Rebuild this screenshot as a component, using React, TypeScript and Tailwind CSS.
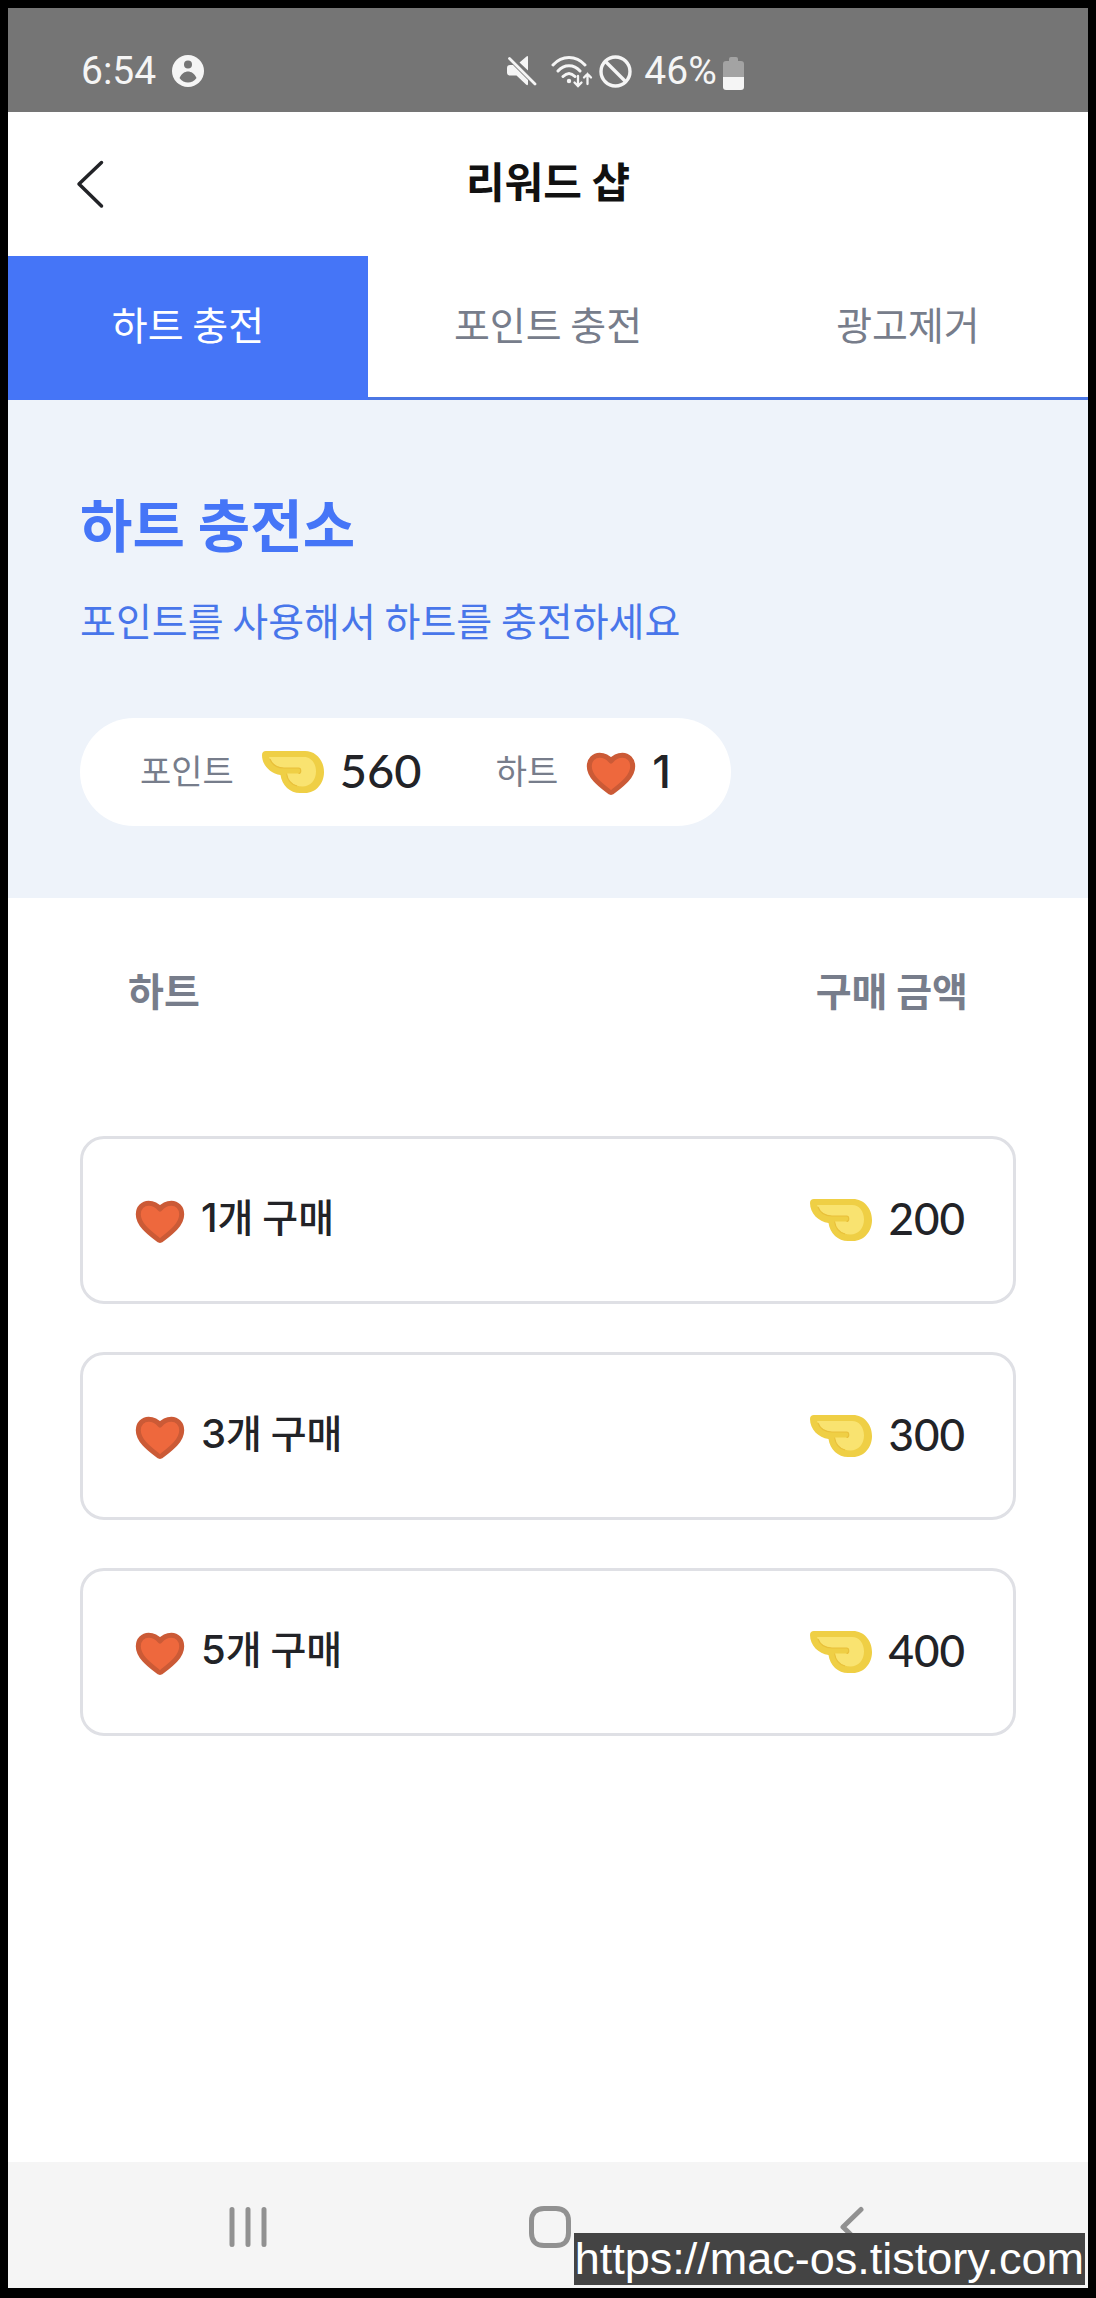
import React from "react";

const fonts = "font-['Noto_Sans_CJK_KR',sans-serif]";
const priceFont = "font-['Lato','Noto_Sans_CJK_KR',sans-serif]";
const countFont = "font-['Inter','Noto_Sans_CJK_KR',sans-serif]";

function HeartIcon() {
  return (
    <svg width="50" height="44" viewBox="0 0 50 44" aria-hidden="true" className="mt-1 shrink-0">
      <path
        d="M25 40.5C23.8 40.5 22.800 39.500 21.500 38.300C14 32.500 3.300 24.500 3.300 14.200C3.300 7.600 8 3.200 13.600 3.200C18.600 3.200 22.600 5.800 25 9C27.400 5.800 31.400 3.200 36.400 3.200C42 3.200 46.700 7.600 46.700 14.200C46.700 24.500 36 32.500 28.500 38.300C27.200 39.500 26.200 40.500 25 40.500Z"
        fill="#ee683d"
        stroke="#cb5a36"
        strokeWidth="5"
        strokeLinejoin="round"
      />
    </svg>
  );
}

function PointIcon() {
  return (
    <svg width="62" height="42" viewBox="0 0 62 42" aria-hidden="true" className="shrink-0">
      <path
        d="M4 0H43C54 0 62 9.500 62 21C62 32.500 54 42 43 42H38C28 42 20 34.500 18.500 24C8.500 22.500 0 14.500 0 4C0 1.500 1.500 0 4 0Z"
        fill="#efcf45"
      />
      <path
        d="M7 6H42C49 6 54 12 54 20.500C54 29 48.500 35.500 40.500 35.500C32 35.500 25.500 30.500 24.500 22.500H36.500C39.500 22.500 39.500 17 36.500 17H22C15 16.500 9.500 12.500 7 6Z"
        fill="#f9e370"
      />
      <path
        d="M8 8C10 13.500 15 17 22 17H36.500C39.500 17 39.500 22.500 36.500 22.500M24.500 22.500C25.500 29 29.500 33.500 35 35"
        fill="none"
        stroke="#e9c03a"
        strokeWidth="1.2"
      />
    </svg>
  );
}

function StatusBar() {
  return (
    <div className="flex h-[104px] items-center bg-[#757575] px-[73px] pt-[22px] font-['Roboto',sans-serif] text-[39px] leading-[46px] text-[#f5f5f5]">
      <div className="flex flex-[11] items-center gap-4">
        <span>6:54</span>
        <svg width="32" height="32" viewBox="0 0 32 32" aria-hidden="true">
          <circle cx="16" cy="16" r="16" fill="#f5f5f5" />
          <circle cx="16" cy="9.500" r="4" fill="#757575" />
          <path d="M7.500 23C9.500 18.500 13 16.500 16 16.500C19 16.500 22.500 18.500 24.500 23C22.500 26 19 27.500 16 27.500C13 27.500 9.500 26 7.500 23Z" fill="#757575" />
        </svg>
      </div>
      <div className="flex items-center">
        <svg width="30" height="30" viewBox="0 0 30 30" aria-hidden="true">
          <path d="M21 1V14.500L12.500 6.500L19.500 0.500Q21 -0.500 21 1ZM0 12Q0 9 3 9H6L21 24V28Q21 30 19 28.500L9.500 19.500H3Q0 19.500 0 16.500Z" fill="#f5f5f5" />
          <path d="M2.500 2.500L28 28" stroke="#f5f5f5" strokeWidth="2.800" strokeLinecap="round" />
        </svg>
        <svg width="42" height="34" viewBox="0 0 42 34" fill="none" stroke="#f5f5f5" strokeWidth="3" strokeLinecap="round" className="ml-3.5">
          <path d="M2 11C11 1 25 1 34 11M7 17C13 10 23 10 29 17M12 22.500C16 18.500 20 18.500 24 22.500" />
          <circle cx="18" cy="27" r="2.200" fill="#f5f5f5" stroke="none" />
          <path d="M27 22V32M23.500 28.500L27 32L30.500 28.500M36.500 30V20M33 23.500L36.500 20L40 23.500" strokeWidth="2.300" />
        </svg>
        <svg width="33" height="33" viewBox="0 0 33 33" fill="none" stroke="#f5f5f5" strokeWidth="3.400" className="ml-1.5">
          <circle cx="16.500" cy="16.500" r="14.500" />
          <path d="M6.500 6.500L26.500 26.500" />
        </svg>
        <span className="ml-3">46%</span>
        <svg width="21" height="33" viewBox="0 0 21 33" aria-hidden="true" className="mt-1 ml-1.5">
          <path d="M6 2Q6 0 8 0H13Q15 0 15 2V4H18Q21 4 21 7V20H0V7Q0 4 3 4H6Z" fill="#a3a3a3" />
          <path d="M0 20H21V30Q21 33 18 33H3Q0 33 0 30Z" fill="#f5f5f5" />
        </svg>
      </div>
      <div className="flex-[7]" />
    </div>
  );
}

const tabs = ["하트 충전", "포인트 충전", "광고제거"];
const items = [
  { count: 1, price: 200 },
  { count: 3, price: 300 },
  { count: 5, price: 400 },
];

export default function App() {
  return (
    <div className={`${fonts} flex min-h-screen flex-col border-8 border-b-[10px] border-black bg-white text-[#222327]`}>
      <StatusBar />

      <header className="grid h-36 grid-cols-[1fr_auto_1fr] items-center px-16">
        <button type="button" aria-label="뒤로" className="w-fit">
          <svg width="36" height="50" viewBox="0 0 36 50" fill="none" stroke="#222327" strokeWidth="3.500" strokeLinecap="round" strokeLinejoin="round">
            <path d="M29.500 3.500L7 25L29.500 47" />
          </svg>
        </button>
        <h1 className="pb-2 text-[42px] leading-[60px] font-bold text-[#111111]">리워드 샵</h1>
      </header>

      <nav className="grid h-36 grid-cols-3 text-[39px] leading-[58px]">
        {tabs.map((tab, i) => (
          <button
            key={tab}
            type="button"
            aria-current={i === 0 ? "page" : undefined}
            className={
              i === 0
                ? "border-b-[3px] border-[#4575f7] bg-[#4575f7] pb-2 text-white"
                : "border-b-[3px] border-[#4b77e4] bg-white pb-2 text-[#777d8b]"
            }
          >
            {tab}
          </button>
        ))}
      </nav>

      <section className="bg-[#eef3fa] px-18 pt-20 pb-18 text-[#4575f7]">
        <h2 className="text-[57px] leading-[84px] font-bold">하트 충전소</h2>
        <p className="mt-[26px] text-[39px] leading-[58px] text-[#4876ea]">포인트를 사용해서 하트를 충전하세요</p>
        <div className="mt-[70px] flex h-[108px] w-fit items-center rounded-full bg-white px-[60px] text-[#222327]">
          <span className="pb-1.5 text-[34px] text-[#777d8b]">포인트</span>
          <span className="ml-7 flex items-center gap-4">
            <PointIcon />
            <span className={`${priceFont} pb-1 text-[47px] font-medium`}>560</span>
          </span>
          <span className="ml-[74px] pb-1.5 text-[34px] text-[#777d8b]">하트</span>
          <span className="ml-7 flex items-center gap-4">
            <HeartIcon />
            <span className={`${countFont} text-[45px] font-medium`}>1</span>
          </span>
        </div>
      </section>

      <main className="flex-1 px-18">
        <div className="flex justify-between px-12 pt-[62px] pb-[118px] text-[39px] leading-[58px] font-bold text-[#777d8b]">
          <span>하트</span>
          <span>구매 금액</span>
        </div>
        <ul className="flex flex-col gap-12">
          {items.map((item) => (
            <li key={item.count}>
              <button
                type="button"
                className="flex h-[168px] w-full items-center justify-between rounded-3xl border-[3px] border-[#dfe0e5] bg-white pr-12 pl-[52px] text-[39px] leading-[58px] font-medium"
              >
                <span className="flex items-center gap-4">
                  <HeartIcon />
                  <span className="pb-2">
                    <span className={`${countFont} text-[40px]`}>{item.count}</span>개 구매
                  </span>
                </span>
                <span className="flex items-center gap-4">
                  <PointIcon />
                  <span className={`${priceFont} pb-1 text-[44px]`}>{item.price}</span>
                </span>
              </button>
            </li>
          ))}
        </ul>
      </main>

      <footer className="relative flex h-[126px] items-center justify-center gap-[260px] bg-[#f5f5f5] pt-1 pl-1">
        <button type="button" aria-label="최근 앱" className="flex w-[42px] justify-center">
          <svg width="38" height="42" viewBox="0 0 38 42" stroke="#919191" strokeWidth="5" strokeLinecap="round">
            <path d="M3 3.500V38.500M19 3.500V38.500M35 3.500V38.500" />
          </svg>
        </button>
        <button type="button" aria-label="홈" className="flex w-[42px] justify-center">
          <svg width="42" height="42" viewBox="0 0 42 42" fill="none" stroke="#919191" strokeWidth="5">
            <path d="M15 2.500H27C35 2.500 39.500 7 39.500 15V27C39.500 35 35 39.500 27 39.500H15C7 39.500 2.500 35 2.500 27V15C2.500 7 7 2.500 15 2.500Z" />
          </svg>
        </button>
        <button type="button" aria-label="이전" className="flex w-[42px] justify-center">
          <svg width="26" height="42" viewBox="0 0 26 42" fill="none" stroke="#919191" strokeWidth="5" strokeLinecap="round" strokeLinejoin="round">
            <path d="M22 3.500L4 21L22 38.500" />
          </svg>
        </button>
        <a
          href="https://mac-os.tistory.com"
          className="absolute right-[3px] bottom-[3px] bg-[#444444] px-px font-['Liberation_Sans',sans-serif] text-[45px] leading-[52px] text-white"
        >
          https://mac-os.tistory.com
        </a>
      </footer>
    </div>
  );
}
